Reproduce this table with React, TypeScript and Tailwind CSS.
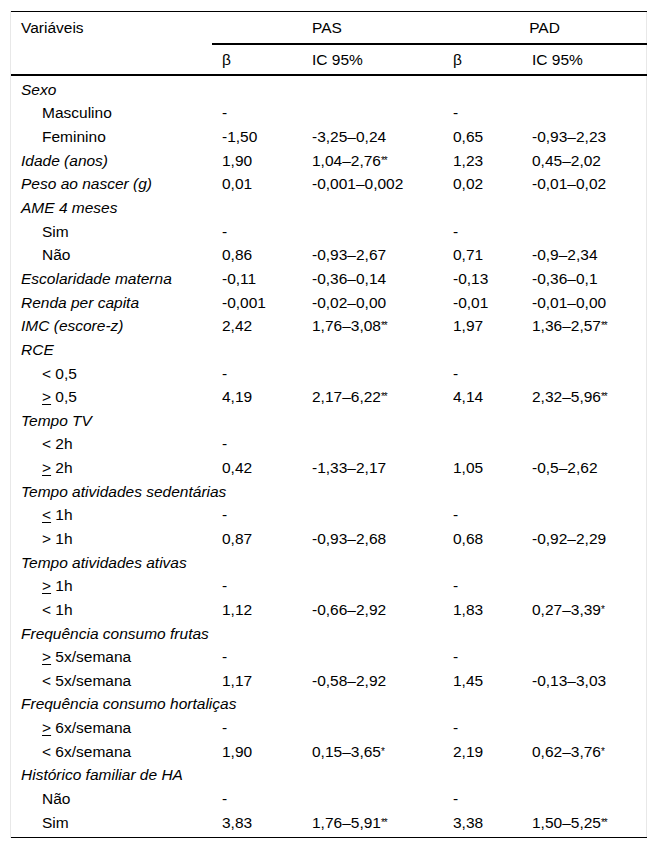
import React from 'react';

type Row = {
  label: string;
  kind: 'group' | 'var' | 'sub';
  values?: [string, string, string, string];
};

const rows: Row[] = [
  { label: 'Sexo', kind: 'group' },
  { label: 'Masculino', kind: 'sub', values: ['-', '', '-', ''] },
  { label: 'Feminino', kind: 'sub', values: ['-1,50', '-3,25–0,24', '0,65', '-0,93–2,23'] },
  { label: 'Idade (anos)', kind: 'var', values: ['1,90', '1,04–2,76**', '1,23', '0,45–2,02'] },
  { label: 'Peso ao nascer (g)', kind: 'var', values: ['0,01', '-0,001–0,002', '0,02', '-0,01–0,02'] },
  { label: 'AME 4 meses', kind: 'group' },
  { label: 'Sim', kind: 'sub', values: ['-', '', '-', ''] },
  { label: 'Não', kind: 'sub', values: ['0,86', '-0,93–2,67', '0,71', '-0,9–2,34'] },
  { label: 'Escolaridade materna', kind: 'var', values: ['-0,11', '-0,36–0,14', '-0,13', '-0,36–0,1'] },
  { label: 'Renda per capita', kind: 'var', values: ['-0,001', '-0,02–0,00', '-0,01', '-0,01–0,00'] },
  { label: 'IMC (escore-z)', kind: 'var', values: ['2,42', '1,76–3,08**', '1,97', '1,36–2,57**'] },
  { label: 'RCE', kind: 'group' },
  { label: '< 0,5', kind: 'sub', values: ['-', '', '-', ''] },
  { label: '≥ 0,5', kind: 'sub', values: ['4,19', '2,17–6,22**', '4,14', '2,32–5,96**'] },
  { label: 'Tempo TV', kind: 'group' },
  { label: '< 2h', kind: 'sub', values: ['-', '', '', ''] },
  { label: '≥ 2h', kind: 'sub', values: ['0,42', '-1,33–2,17', '1,05', '-0,5–2,62'] },
  { label: 'Tempo atividades sedentárias', kind: 'group' },
  { label: '≤ 1h', kind: 'sub', values: ['-', '', '-', ''] },
  { label: '> 1h', kind: 'sub', values: ['0,87', '-0,93–2,68', '0,68', '-0,92–2,29'] },
  { label: 'Tempo atividades ativas', kind: 'group' },
  { label: '≥ 1h', kind: 'sub', values: ['-', '', '-', ''] },
  { label: '< 1h', kind: 'sub', values: ['1,12', '-0,66–2,92', '1,83', '0,27–3,39*'] },
  { label: 'Frequência consumo frutas', kind: 'group' },
  { label: '≥ 5x/semana', kind: 'sub', values: ['-', '', '-', ''] },
  { label: '< 5x/semana', kind: 'sub', values: ['1,17', '-0,58–2,92', '1,45', '-0,13–3,03'] },
  { label: 'Frequência consumo hortaliças', kind: 'group' },
  { label: '≥ 6x/semana', kind: 'sub', values: ['-', '', '-', ''] },
  { label: '< 6x/semana', kind: 'sub', values: ['1,90', '0,15–3,65*', '2,19', '0,62–3,76*'] },
  { label: 'Histórico familiar de HA', kind: 'group' },
  { label: 'Não', kind: 'sub', values: ['-', '', '-', ''] },
  { label: 'Sim', kind: 'sub', values: ['3,83', '1,76–5,91**', '3,38', '1,50–5,25**'] },
];

// ≥ and ≤ are printed as an underlined > / < in the source table
const Label = ({ text }: { text: string }) => {
  if (text.startsWith('≥ ') || text.startsWith('≤ ')) {
    return (
      <>
        <span className="underline underline-offset-2">{text.startsWith('≥') ? '>' : '<'}</span>
        {text.slice(1)}
      </>
    );
  }
  return <>{text}</>;
};

const Value = ({ text }: { text: string }) => {
  const m = text.match(/^(.*?)(\*+)$/);
  if (!m) return <>{text}</>;
  return (
    <>
      {m[1]}
      <sup className="text-[10px] relative -top-[2px] tracking-[-1px]">{m[2]}</sup>
    </>
  );
};

const App: React.FC = () => {
  return (
    <div className="min-h-screen bg-white pt-[11px] pl-[10px] font-['Liberation_Sans',Arial,sans-serif] text-[15.5px] text-black">
      <div className="w-[637px] border-x border-[#e8e8e8]">
        <table className="w-[636px] table-fixed border-t border-b border-black">
          <colgroup>
            <col className="w-[201px]" />
            <col className="w-[90px]" />
            <col className="w-[140px]" />
            <col className="w-[80px]" />
            <col className="w-[125px]" />
          </colgroup>
          <thead>
            <tr>
              <th className="text-left font-normal pl-[10px] pt-[7px] pb-[7px] leading-[17px] align-top">Variáveis</th>
              <th colSpan={2} className="font-normal text-center border-b-2 border-black pt-[7px] pb-[7px] leading-[17px]">PAS</th>
              <th colSpan={2} className="font-normal text-center border-b-2 border-black pt-[7px] pb-[7px] leading-[17px]">PAD</th>
            </tr>
            <tr className="border-b-2 border-black">
              <th className="py-[6px]" />
              <th className="text-left font-normal pl-[10px] py-[6px] leading-[17px]">β</th>
              <th className="text-left font-normal pl-[10px] py-[6px] leading-[17px]">IC 95%</th>
              <th className="text-left font-normal pl-[11px] py-[6px] leading-[17px]">β</th>
              <th className="text-left font-normal pl-[10px] py-[6px] leading-[17px]">IC 95%</th>
            </tr>
          </thead>
          <tbody>
            {rows.map((row, i) => (
              <tr key={i} className="h-[23.65px]">
                <td
                  className={
                    row.kind === 'sub'
                      ? 'pl-[31px] pt-[5px] pb-0 leading-[17px] whitespace-nowrap'
                      : 'pl-[10px] pt-[5px] pb-0 leading-[17px] italic whitespace-nowrap'
                  }
                >
                  <Label text={row.label} />
                </td>
                {row.values ? (
                  row.values.map((v, j) => (
                    <td
                      key={j}
                      className={
                        j === 2
                          ? 'pl-[11px] pt-[5px] pb-0 leading-[17px] whitespace-nowrap'
                          : 'pl-[10px] pt-[5px] pb-0 leading-[17px] whitespace-nowrap'
                      }
                    >
                      <Value text={v} />
                    </td>
                  ))
                ) : (
                  <td colSpan={4} className="pt-[5px]" />
                )}
              </tr>
            ))}
            <tr className="h-[6px]">
              <td colSpan={5} className="p-0" />
            </tr>
          </tbody>
        </table>
      </div>
    </div>
  );
};

export default App;
